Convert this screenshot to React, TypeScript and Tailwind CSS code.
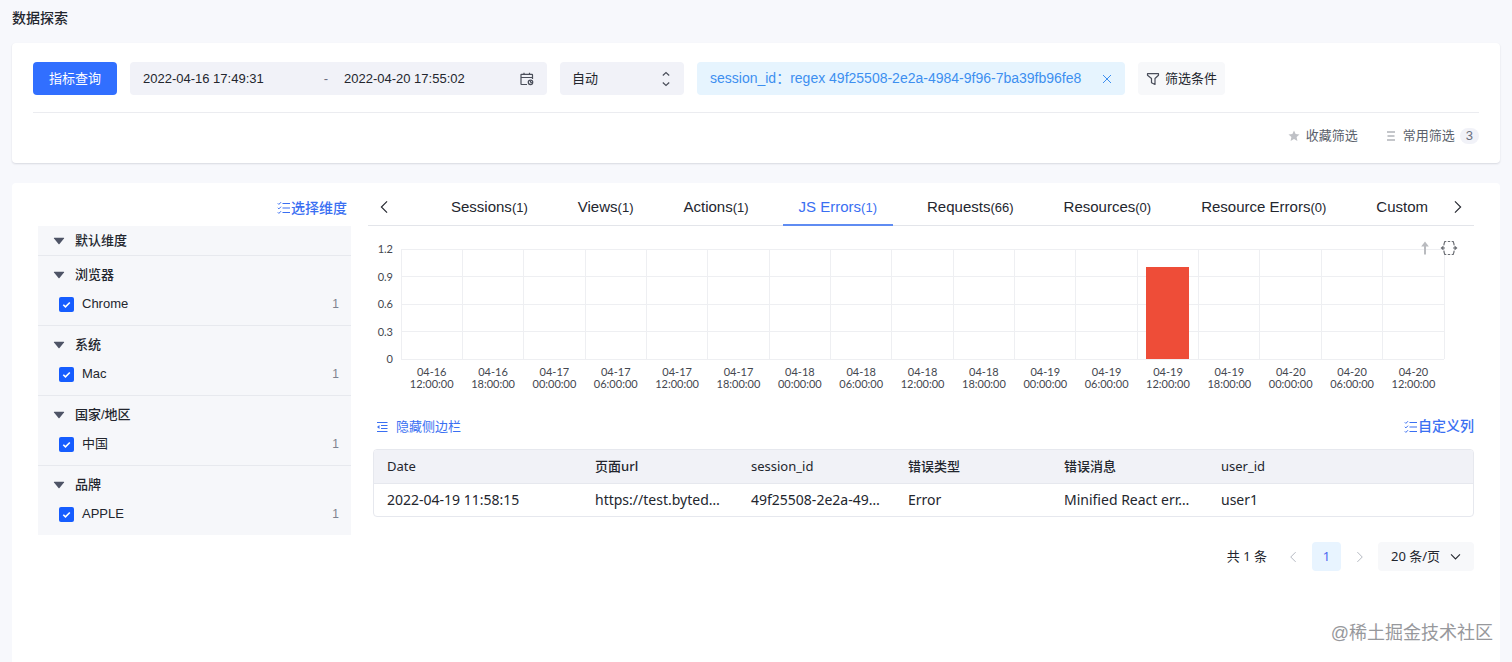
import { useState } from 'react'
import type { ReactNode } from 'react'

const TABS = [
  { name: 'Sessions', count: 1 },
  { name: 'Views', count: 1 },
  { name: 'Actions', count: 1 },
  { name: 'JS Errors', count: 1 },
  { name: 'Requests', count: 66 },
  { name: 'Resources', count: 0 },
  { name: 'Resource Errors', count: 0 },
  { name: 'Custom' },
]

const DIMENSIONS = [
  { title: '浏览器', label: 'Chrome', count: 1 },
  { title: '系统', label: 'Mac', count: 1 },
  { title: '国家/地区', label: '中国', count: 1 },
  { title: '品牌', label: 'APPLE', count: 1 },
]

const Y_TICKS = ['1.2', '0.9', '0.6', '0.3', '0']
const Y_MAX = 1.2

const BUCKETS = [
  { day: '04-16', time: '12:00:00', value: 0 },
  { day: '04-16', time: '18:00:00', value: 0 },
  { day: '04-17', time: '00:00:00', value: 0 },
  { day: '04-17', time: '06:00:00', value: 0 },
  { day: '04-17', time: '12:00:00', value: 0 },
  { day: '04-17', time: '18:00:00', value: 0 },
  { day: '04-18', time: '00:00:00', value: 0 },
  { day: '04-18', time: '06:00:00', value: 0 },
  { day: '04-18', time: '12:00:00', value: 0 },
  { day: '04-18', time: '18:00:00', value: 0 },
  { day: '04-19', time: '00:00:00', value: 0 },
  { day: '04-19', time: '06:00:00', value: 0 },
  { day: '04-19', time: '12:00:00', value: 1 },
  { day: '04-19', time: '18:00:00', value: 0 },
  { day: '04-20', time: '00:00:00', value: 0 },
  { day: '04-20', time: '06:00:00', value: 0 },
  { day: '04-20', time: '12:00:00', value: 0 },
]

const COLUMNS = [
  { title: 'Date', weight: 'font-normal' },
  { title: '页面url', weight: 'font-medium' },
  { title: 'session_id', weight: 'font-normal' },
  { title: '错误类型', weight: 'font-medium' },
  { title: '错误消息', weight: 'font-medium' },
  { title: 'user_id', weight: 'font-normal' },
]
const ROWS = [
  ['2022-04-19 11:58:15', 'https://test.byted…', '49f25508-2e2a-49…', 'Error', 'Minified React err…', 'user1'],
]

/* ── Icons ── */

function Chevron({ d, className }: { d: string; className: string }) {
  return (
    <svg viewBox="0 0 16 16" fill="none" stroke="currentColor" strokeWidth="1.300" className={className} aria-hidden="true">
      <path d={d} />
    </svg>
  )
}

const LEFT = 'M11.500 1.500 5 8l6.500 6.500'
const RIGHT = 'M4.500 1.500 11 8l-6.500 6.500'
const DOWN = 'm2.500 5.500 5.500 5.500 5.500-5.500'

function ChecklistIcon() {
  return (
    <svg viewBox="0 0 14 14" fill="none" stroke="currentColor" className="size-[14px]" aria-hidden="true">
      <path d="M5.500 2.500H13M5.500 7H13M5.500 11.500H13" strokeWidth="1.200" />
      <path d="m.8 2.300 1.100 1.100L4 1.200M.8 6.800l1.100 1.100L4 5.700M.8 11.300l1.100 1.100L4 10.200" />
    </svg>
  )
}

function CalendarIcon() {
  return (
    <svg viewBox="0 0 14 14" fill="none" stroke="#4a4e5a" className="size-[14px] shrink-0" aria-hidden="true">
      <path d="M7 12.500H1.500a.5.5 0 0 1-.5-.5V2.800a.5.5 0 0 1 .5-.5h10.500a.5.5 0 0 1 .5.5V7M1 5.500h11.500M4 .8v2M9.500 .8v2" strokeWidth="1.200" />
      <circle cx="10.500" cy="10.300" r="2.200" strokeWidth="1.300" />
      <path d="M10.500 9v1.500h1.400" />
    </svg>
  )
}

function FilterIcon() {
  return (
    <svg viewBox="0 0 14 14" fill="none" stroke="#4a4e5a" strokeWidth="1.200" strokeLinejoin="round" className="size-[14px]" aria-hidden="true">
      <path d="M1.500 1.700h11v1.500L9 6.500v6L5.500 10.800V6.500L1.500 3.200z" />
    </svg>
  )
}

function Caret() {
  return (
    <svg viewBox="0 0 12 8" fill="currentColor" className="h-[8px] w-[12px] text-[#4e5466]" aria-hidden="true">
      <path d="M1.300.8h9.400q.8 0 .3.700L6.500 7q-.5.600-1 0L1 1.500Q.5.800 1.300.800z" />
    </svg>
  )
}

/* ── Filter panel ── */

function FilterPanel() {
  return (
    <section className="rounded bg-white px-[21px] pt-[19px] shadow-[0_1px_2px_rgba(30,35,60,0.14)]">
      <div className="flex flex-wrap items-center gap-[13px] border-b border-[#ebecf0] pb-[17px]">
        <button className="h-[33px] w-[84px] rounded bg-[#316fff] text-[13px] text-white">指标查询</button>

        <div className="flex h-[33px] w-[417px] items-center rounded-sm bg-[#f1f2f8] px-[13px]">
          <input aria-label="开始时间" defaultValue="2022-04-16 17:49:31" className="w-[165px] bg-transparent outline-none" />
          <span className="w-[36px] text-center text-[#6b7080]">-</span>
          <input aria-label="结束时间" defaultValue="2022-04-20 17:55:02" className="min-w-0 flex-1 bg-transparent outline-none" />
          <CalendarIcon />
        </div>

        <div className="relative">
          <select aria-label="时间粒度" className="h-[33px] w-[124px] appearance-none rounded-sm bg-[#f1f2f8] px-3 outline-none">
            <option>自动</option>
          </select>
          <svg viewBox="0 0 10 16" fill="none" stroke="#4a4e5a" className="pointer-events-none absolute top-[9px] right-[13px] h-[16px] w-[10px]" aria-hidden="true">
            <path d="M1.800 4.500 5 1.500l3.200 3M1.800 11.500 5 14.500l3.200-3" strokeWidth="1.200" />
          </svg>
        </div>

        <div className="flex h-[33px] w-[428px] items-center justify-between rounded bg-[#e6f4fe] px-[13px] text-[14px] whitespace-nowrap text-[#3d8ff0]">
          <span>session_id：regex 49f25508-2e2a-4984-9f96-7ba39fb96fe8</span>
          <button aria-label="移除筛选">
            <svg viewBox="0 0 10 10" fill="none" stroke="currentColor" className="size-[10px]" aria-hidden="true">
              <path d="m1 1 8 8M9 1 1 9" />
            </svg>
          </button>
        </div>

        <button className="flex h-[33px] items-center gap-[5px] rounded-sm bg-[#f7f8fa] px-2">
          <FilterIcon />
          筛选条件
        </button>
      </div>

      <div className="flex h-[50px] items-center justify-end gap-[28px] pb-1 text-[#5a5f6b]">
        <button className="flex items-center gap-[6px]">
          <svg viewBox="0 0 12 12" fill="#bfc1c6" className="size-[12px]" aria-hidden="true">
            <path d="m6 .5 1.600 3.600 3.900.400-2.900 2.600.8 3.900L6 9l-3.400 2 .8-3.900L.5 4.500l3.900-.4z" />
          </svg>
          收藏筛选
        </button>
        <button className="flex items-center">
          <svg viewBox="0 0 10 12" stroke="#c4c6ca" strokeWidth="2" className="mr-[7px] h-[12px] w-[10px]" aria-hidden="true">
            <path d="M1 2h8M1.500 6h7M1 10h8" />
          </svg>
          常用筛选
          <span className="ml-[5px] rounded-full bg-[#f1f2f8] px-[6px] leading-4 text-[#6b7080]">3</span>
        </button>
      </div>
    </section>
  )
}

/* ── Sidebar ── */

function Sidebar() {
  return (
    <aside className="w-[313px] shrink-0">
      <div className="flex h-[43px] items-center justify-end pt-[7px] pr-[4px]">
        <button className="flex items-center text-[14px] font-medium text-[#3a6ff2]">
          <ChecklistIcon />
          选择维度
        </button>
      </div>

      <div className="bg-[#f6f7fa]">
        <button className="flex h-[30px] w-full items-center gap-[10px] border-b border-[#e7e9ee] px-[15px] font-medium">
          <Caret />
          默认维度
        </button>
        {DIMENSIONS.map((dim) => (
          <div key={dim.title} className="border-b border-[#e7e9ee] pt-[9px] pb-[11px] last:border-b-0">
            <button className="flex h-[20px] w-full items-center gap-[10px] px-[15px] font-medium">
              <Caret />
              {dim.title}
            </button>
            <label className="mt-[9px] flex h-[20px] items-center pr-[12px] pl-[21px]">
              <span className="relative size-[15px]">
                <input type="checkbox" defaultChecked className="peer block size-[15px] appearance-none rounded-xs bg-white checked:bg-[#165dff]" />
                <svg viewBox="0 0 15 15" fill="none" stroke="#fff" strokeWidth="1.600" className="pointer-events-none absolute inset-0 size-[15px]" aria-hidden="true">
                  <path d="m4.300 7.700 2.200 2.200 4.300-4.400" />
                </svg>
              </span>
              <span className="ml-[8px] flex-1">{dim.label}</span>
              <span className="text-[12px] text-[#7d8290]">{dim.count}</span>
            </label>
          </div>
        ))}
      </div>
    </aside>
  )
}

/* ── Tabs ── */

function Tabs() {
  const [active, setActive] = useState('JS Errors')
  return (
    <nav className="flex h-[43px] items-stretch border-b border-[#e3e5ea] pt-[6px] text-[15px]">
      <button aria-label="向左" className="pl-[9px]">
        <Chevron d={LEFT} className="size-[14px]" />
      </button>
      <div role="tablist" className="ml-[44px] flex min-w-0 flex-1 gap-[18px]">
        {TABS.map((tab) => (
          <button
            key={tab.name}
            role="tab"
            aria-selected={tab.name === active}
            onClick={() => setActive(tab.name)}
            className={
              tab.name === active
                ? '-mb-px border-b-2 border-[#5f8cf2] px-[16px] pt-px whitespace-nowrap text-[#3a6ff2]'
                : 'px-[16px] whitespace-nowrap'
            }
          >
            {tab.name}
            {tab.count !== undefined && <span className="text-[13px]">({tab.count})</span>}
          </button>
        ))}
      </div>
      <button aria-label="向右" className="pr-[9px]">
        <Chevron d={RIGHT} className="size-[14px]" />
      </button>
    </nav>
  )
}

/* ── Chart ── */

function Chart() {
  const n = BUCKETS.length
  return (
    <div className="relative mt-[17px] flex pr-[30px] font-['Lato',sans-serif] text-[11px] text-[#44474f]">
      <div className="flex h-[122px] w-[25px] flex-col justify-between text-right leading-[12px]">
        {Y_TICKS.map((t) => (
          <span key={t}>{t}</span>
        ))}
      </div>
      <div className="ml-[8px] flex-1 pt-[6px]">
        <svg viewBox={`0 0 ${n} ${Y_MAX}`} preserveAspectRatio="none" className="block h-[110px] w-full overflow-visible" shapeRendering="crispEdges" role="img" aria-label="JS Errors">
          {Y_TICKS.map((t) => (
            <path key={t} d={`M0 ${Y_MAX - Number(t)}H${n}`} stroke="#eeeff2" vectorEffect="non-scaling-stroke" />
          ))}
          {Array.from({ length: n + 1 }).map((_, i) => (
            <path key={i} d={`M${i} 0V${Y_MAX}`} stroke="#eeeff2" vectorEffect="non-scaling-stroke" />
          ))}
          {BUCKETS.map((b, i) =>
            b.value > 0 ? <rect key={i} x={i + 0.15} y={Y_MAX - b.value} width="0.7" height={b.value} fill="#ee4d38" /> : null,
          )}
        </svg>
        <div className="mt-[7px] flex leading-[12px]">
          {BUCKETS.map((b, i) => (
            <div key={i} className="flex-1 text-center">
              <div>{b.day}</div>
              <div>{b.time}</div>
            </div>
          ))}
        </div>
      </div>

      {/* toolbox over the top right corner of the plot */}
      <div className="absolute -top-[3px] right-[16px] flex items-center gap-[10px]">
        <button aria-label="上移">
          <svg viewBox="0 0 10 16" fill="none" stroke="#b9bbbf" strokeWidth="2" className="h-[16px] w-[10px]" aria-hidden="true">
            <path d="M5 14.500V5" />
            <path d="M5 1.500 1.200 6.500h7.600z" fill="#b9bbbf" stroke="none" />
          </svg>
        </button>
        <button aria-label="区域缩放">
          <svg viewBox="0 0 18 16" fill="none" stroke="#6b6e74" strokeWidth="1.200" className="h-[16px] w-[18px]" aria-hidden="true">
            <path d="M4 5.200V4l.8-2.500h1.500M7.800 1.500h2.400M11.700 1.500h1.500L14 4v1.200M4 10.800V12l.8 2.500h1.500M7.800 14.500h2.400M11.700 14.500h1.500L14 12v-1.200" />
            <path d="M3.500 5.500.500 8l3 2.500zM14.500 5.500l3 2.500-3 2.500z" fill="#6b6e74" stroke="none" />
            <path d="M3 8h2M13 8h2" />
          </svg>
        </button>
      </div>
    </div>
  )
}

/* ── Result table ── */

function ResultTable() {
  return (
    <div className="ml-[5px] overflow-hidden rounded border border-[#e6e8ee] font-['Noto_Sans','Noto_Sans_CJK_SC',sans-serif]">
      <table className="w-full table-fixed border-collapse text-left">
        <colgroup>
          <col className="w-[208px]" />
          <col className="w-[156px]" />
          <col className="w-[157px]" />
          <col className="w-[156px]" />
          <col className="w-[157px]" />
          <col />
        </colgroup>
        <thead className="bg-[#f1f2f7] text-[13px]">
          <tr className="h-[33px] border-b border-[#e6e8ee]">
            {COLUMNS.map((c) => (
              <th key={c.title} className={`px-[13px] ${c.weight}`}>{c.title}</th>
            ))}
          </tr>
        </thead>
        <tbody className="text-[14px]">
          {ROWS.map((row) => (
            <tr key={row[0]} className="h-[33px]">
              {row.map((cell, i) => (
                <td key={i} className="px-[13px] whitespace-nowrap">{cell}</td>
              ))}
            </tr>
          ))}
        </tbody>
      </table>
    </div>
  )
}

function Pagination() {
  return (
    <div className="mt-[25px] flex items-center justify-end font-['Noto_Sans','Noto_Sans_CJK_SC',sans-serif]">
      <span>共 1 条</span>
      <button aria-label="上一页" className="ml-[20px] text-[#b3b7c0]">
        <Chevron d={LEFT} className="size-[12px]" />
      </button>
      <button className="mx-[13px] size-[29px] rounded-sm bg-[#e8f4ff] text-[#4a68f0]">1</button>
      <button aria-label="下一页" className="text-[#b3b7c0]">
        <Chevron d={RIGHT} className="size-[12px]" />
      </button>
      <div className="relative ml-[12px]">
        <select aria-label="每页条数" className="h-[29px] w-[96px] appearance-none rounded-sm bg-[#f7f8fa] pl-[13px] outline-none">
          <option>20 条/页</option>
        </select>
        <Chevron d={DOWN} className="pointer-events-none absolute top-[8px] right-[12px] size-[13px]" />
      </div>
    </div>
  )
}

function Panel({ children }: { children: ReactNode }) {
  return <section className="flex flex-1 rounded-t bg-white pr-[26px] pb-[40px] pl-[26px]">{children}</section>
}

export default function App() {
  return (
    <div className="relative flex min-h-screen flex-col bg-[#f7f8fc] px-3 font-['Liberation_Sans','Noto_Sans_CJK_SC',sans-serif] text-[13px] text-[#23262e]">
      <h1 className="flex h-[43px] items-center pb-[7px] text-[14px] font-medium">数据探索</h1>
      <FilterPanel />
      <div className="h-[20px]" />
      <Panel>
        <Sidebar />
        <main className="ml-[17px] min-w-0 flex-1">
          <Tabs />
          <Chart />
          <div className="mt-[26px] mb-[12px] flex items-center justify-between pl-[8px] text-[#3a6ff2]">
            <button className="flex items-center gap-[8px]">
              <svg viewBox="0 0 12 12" fill="none" stroke="currentColor" className="size-[12px]" aria-hidden="true">
                <path d="M1 1.500h10.500M5 4.500h6.500M5 7.500h6.500M1 10.500h10.500" />
                <path d="M3.500 4 1 6l2.500 2z" fill="currentColor" stroke="none" />
              </svg>
              隐藏侧边栏
            </button>
            <button className="flex items-center text-[14px] font-medium">
              <ChecklistIcon />
              自定义列
            </button>
          </div>
          <ResultTable />
          <Pagination />
        </main>
      </Panel>
      <div className="pointer-events-none absolute right-[19px] bottom-[16px] text-[18px] leading-[26px] text-[#97989c]">@稀土掘金技术社区</div>
    </div>
  )
}
